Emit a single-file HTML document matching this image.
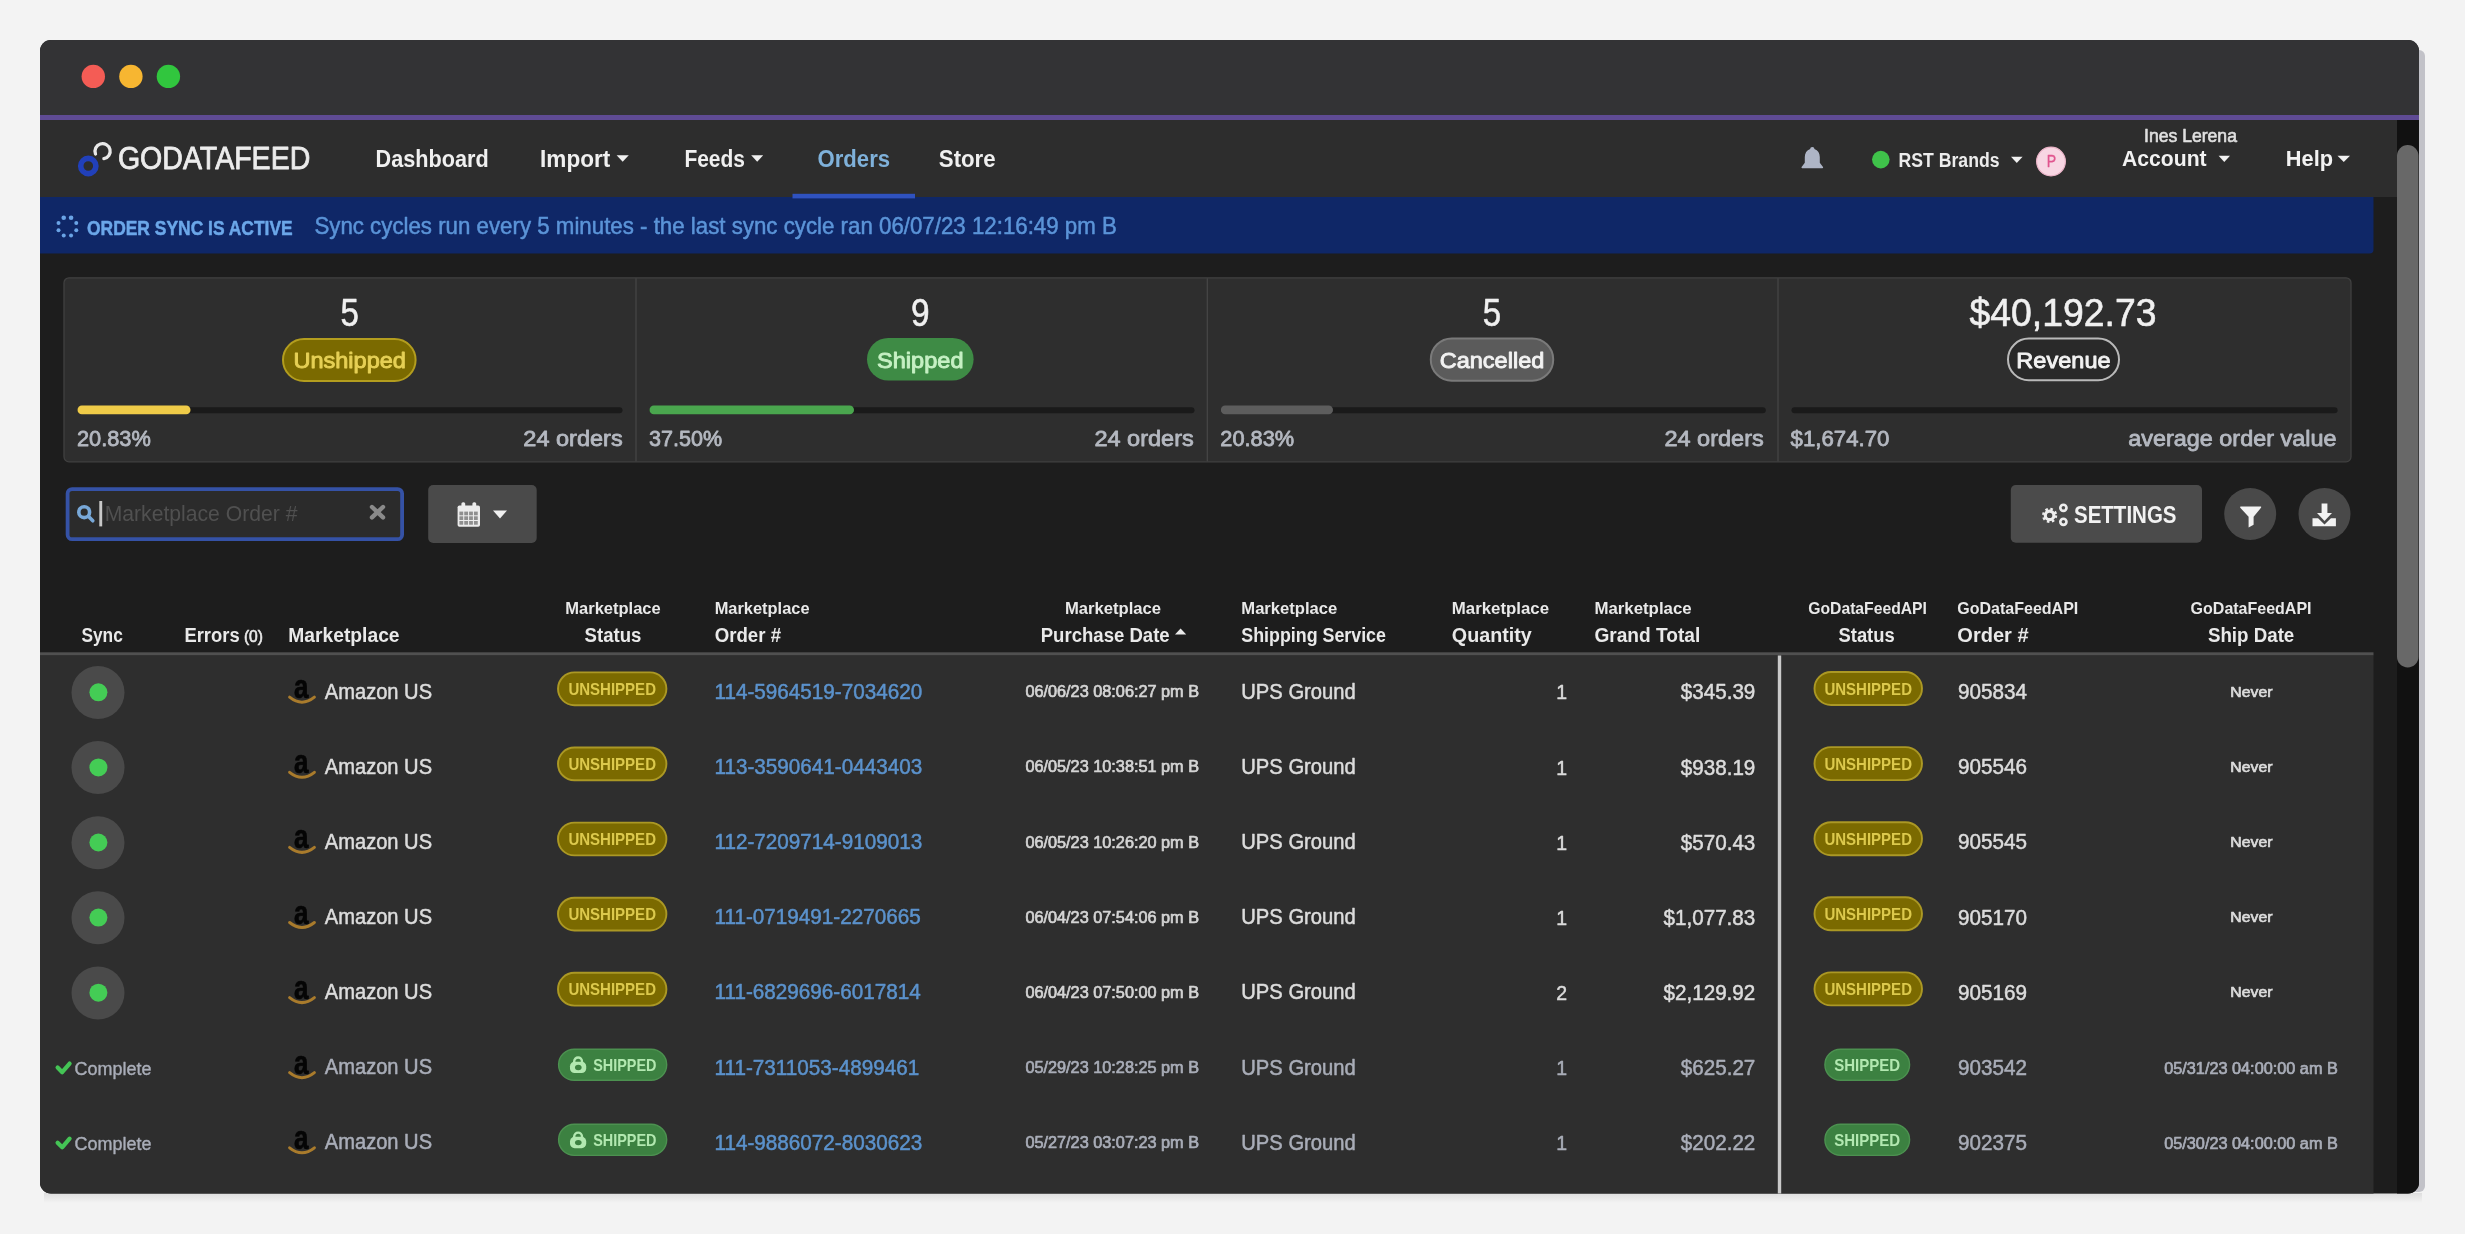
<!DOCTYPE html>
<html><head><meta charset="utf-8"><title>GoDataFeed Orders</title>
<style>html,body{margin:0;padding:0;background:#f3f3f3;overflow:hidden}
svg{display:block;will-change:transform;font-family:"Liberation Sans",sans-serif}</style></head>
<body><svg width="2465" height="1234" viewBox="0 0 2465 1234">
<rect width="2465" height="1234" fill="#f3f3f3"/>
<defs><linearGradient id="sh" x1="0" y1="0" x2="0" y2="1"><stop offset="0" stop-color="#dedede"/><stop offset="1" stop-color="#f3f3f3"/></linearGradient><clipPath id="win"><rect x="40" y="40" width="2379" height="1153.5" rx="11"/></clipPath></defs>
<rect x="44.00" y="1193.00" width="2378.00" height="10.00" fill="url(#sh)"/>
<rect x="2410.00" y="50.00" width="15.00" height="1142.00" fill="#c2c2c8" rx="6"/>
<g clip-path="url(#win)">
<rect x="40.00" y="40.00" width="2379.00" height="1154.00" fill="#1d1d1d"/>
<rect x="40.00" y="40.00" width="2379.00" height="75.00" fill="#333335"/>
<circle cx="93.30" cy="76.40" r="11.70" fill="#f45c55"/>
<circle cx="130.90" cy="76.40" r="11.70" fill="#f7b631"/>
<circle cx="168.40" cy="76.40" r="11.70" fill="#31c63e"/>
<rect x="40.00" y="115.00" width="2379.00" height="5.00" fill="#5f4b94"/>
<rect x="40.00" y="120.00" width="2379.00" height="77.00" fill="#2d2d2d"/>
<rect x="2397.00" y="120.00" width="22.00" height="1074.00" fill="#111111"/>
<rect x="2397" y="145" width="21.5" height="522.5" rx="10.75" fill="#686868"/>
<circle cx="88.3" cy="166" r="7.6" fill="none" stroke="#2140ba" stroke-width="5.6"/>
<path d="M95.5 154 A7.6 7.6 0 1 1 103.9 158.7" fill="none" stroke="#e8e8e8" stroke-width="3.3" stroke-linecap="round"/>
<text x="117.90" y="169.30" font-size="31.40" fill="#ececec" textLength="192.41" lengthAdjust="spacingAndGlyphs" stroke="#ececec" stroke-width="0.8" stroke-linejoin="round">GODATAFEED</text>
<text x="375.60" y="167.40" font-size="24.42" fill="#f0f0f0" font-weight="bold" textLength="113.15" lengthAdjust="spacingAndGlyphs">Dashboard</text>
<text x="540.10" y="167.40" font-size="24.42" fill="#f0f0f0" font-weight="bold" textLength="70.25" lengthAdjust="spacingAndGlyphs">Import</text>
<path d="M616.60 155.20H628.80L622.70 161.80Z" fill="#f0f0f0"/>
<text x="684.40" y="167.40" font-size="24.42" fill="#f0f0f0" font-weight="bold" textLength="60.55" lengthAdjust="spacingAndGlyphs">Feeds</text>
<path d="M751.20 155.20H763.20L757.20 161.80Z" fill="#f0f0f0"/>
<text x="817.50" y="167.40" font-size="24.42" fill="#7fb1da" font-weight="bold" textLength="72.55" lengthAdjust="spacingAndGlyphs">Orders</text>
<text x="938.80" y="167.40" font-size="24.42" fill="#f0f0f0" font-weight="bold" textLength="56.85" lengthAdjust="spacingAndGlyphs">Store</text>
<path d="M1812.3 147c-1.3 0-2.1 .9-2.1 1.9c-3.6 1.2-5.4 4.4-5.4 8.2v5.6l-3.2 4.4c-.3.5 0 1.1.6 1.1h20.2c.6 0 .9-.6.6-1.1l-3.2-4.4v-5.6c0-3.8-1.8-7-5.4-8.2c0-1-.8-1.9-2.1-1.9z" fill="#aeb5c6"/>
<circle cx="1880.80" cy="159.60" r="8.80" fill="#3fc24a"/>
<text x="1898.60" y="167.30" font-size="20.49" fill="#ececec" font-weight="bold" textLength="100.95" lengthAdjust="spacingAndGlyphs">RST Brands</text>
<path d="M2011.00 156.80H2022.60L2016.80 163.00Z" fill="#f0f0f0"/>
<circle cx="2051.00" cy="161.50" r="14.40" fill="#f8d6e3" stroke="#e9b2c6" stroke-width="1.2"/>
<text x="2046.79" y="166.80" font-size="15.70" fill="#e0558e" textLength="9.42" lengthAdjust="spacingAndGlyphs" stroke="#e0558e" stroke-width="0.3" stroke-linejoin="round">P</text>
<text x="2144.00" y="141.70" font-size="18.31" fill="#e0e0e0" textLength="92.93" lengthAdjust="spacingAndGlyphs" stroke="#e0e0e0" stroke-width="0.6" stroke-linejoin="round">Ines Lerena</text>
<text x="2122.00" y="166.20" font-size="22.38" fill="#f2f2f2" font-weight="bold" textLength="84.60" lengthAdjust="spacingAndGlyphs">Account</text>
<path d="M2218.60 155.80H2230.00L2224.30 162.00Z" fill="#f0f0f0"/>
<text x="2285.80" y="166.20" font-size="22.38" fill="#f2f2f2" font-weight="bold" textLength="47.19" lengthAdjust="spacingAndGlyphs">Help</text>
<path d="M2337.50 155.80H2350.00L2343.75 162.00Z" fill="#f0f0f0"/>
<path d="M40 197H2373.5V249.5A4 4 0 0 1 2369.5 253.5H40Z" fill="#0f2767"/>
<rect x="792.50" y="193.80" width="122.50" height="4.60" fill="#2f52bf"/>
<circle cx="63.73" cy="217.73" r="2.30" fill="#6aa4e6"/>
<circle cx="71.07" cy="217.73" r="2.30" fill="#6aa4e6"/>
<circle cx="76.27" cy="222.93" r="2.00" fill="#6aa4e6"/>
<circle cx="76.27" cy="230.27" r="2.00" fill="#6aa4e6"/>
<circle cx="71.07" cy="235.47" r="2.00" fill="#6aa4e6"/>
<circle cx="63.73" cy="235.47" r="2.00" fill="#6aa4e6"/>
<circle cx="58.53" cy="230.27" r="2.00" fill="#6aa4e6"/>
<circle cx="58.53" cy="222.93" r="2.00" fill="#6aa4e6"/>
<text x="87.00" y="234.50" font-size="20.64" fill="#6ba7e9" font-weight="bold" textLength="205.66" lengthAdjust="spacingAndGlyphs" stroke="#6ba7e9" stroke-width="0.5" stroke-linejoin="round">ORDER SYNC IS ACTIVE</text>
<text x="314.40" y="234.00" font-size="23.11" fill="#5b94d8" textLength="802.46" lengthAdjust="spacingAndGlyphs" stroke="#5b94d8" stroke-width="0.5" stroke-linejoin="round">Sync cycles run every 5 minutes - the last sync cycle ran 06/07/23 12:16:49 pm B</text>
<rect x="64.00" y="277.80" width="2287.00" height="184.00" fill="#2e2e2e" rx="5" stroke="#404040" stroke-width="1.3"/>
<rect x="635.40" y="278.30" width="1.20" height="183.00" fill="#474747"/>
<rect x="1206.70" y="278.30" width="1.20" height="183.00" fill="#474747"/>
<rect x="1777.40" y="278.30" width="1.20" height="183.00" fill="#474747"/>
<text x="340.50" y="326.30" font-size="39.24" fill="#f0f0f0" textLength="18.36" lengthAdjust="spacingAndGlyphs" stroke="#f0f0f0" stroke-width="0.6" stroke-linejoin="round">5</text>
<text x="911.10" y="326.30" font-size="39.24" fill="#f0f0f0" textLength="18.56" lengthAdjust="spacingAndGlyphs" stroke="#f0f0f0" stroke-width="0.6" stroke-linejoin="round">9</text>
<text x="1482.80" y="326.30" font-size="39.24" fill="#f0f0f0" textLength="18.36" lengthAdjust="spacingAndGlyphs" stroke="#f0f0f0" stroke-width="0.6" stroke-linejoin="round">5</text>
<text x="1969.50" y="326.30" font-size="39.24" fill="#f0f0f0" textLength="187.06" lengthAdjust="spacingAndGlyphs" stroke="#f0f0f0" stroke-width="0.6" stroke-linejoin="round">$40,192.73</text>
<rect x="283.00" y="339.00" width="132.60" height="42.00" fill="#7b6a00" rx="21" stroke="#b39d1e" stroke-width="2"/>
<text x="293.40" y="367.50" font-size="22.38" fill="#e6d055" textLength="112.58" lengthAdjust="spacingAndGlyphs" stroke="#e6d055" stroke-width="0.9" stroke-linejoin="round">Unshipped</text>
<rect x="867.00" y="338.00" width="106.60" height="42.50" fill="#3e8b45" rx="21.25"/>
<text x="877.09" y="367.50" font-size="22.38" fill="#c6f0c4" textLength="86.41" lengthAdjust="spacingAndGlyphs" stroke="#c6f0c4" stroke-width="0.9" stroke-linejoin="round">Shipped</text>
<rect x="1430.80" y="338.40" width="122.40" height="42.30" fill="#5b5b5b" rx="21" stroke="#7a7a7a" stroke-width="2"/>
<text x="1439.65" y="367.50" font-size="22.38" fill="#f2f2f2" textLength="104.71" lengthAdjust="spacingAndGlyphs" stroke="#f2f2f2" stroke-width="0.9" stroke-linejoin="round">Cancelled</text>
<rect x="2008.00" y="338.60" width="111.00" height="41.60" fill="#292929" rx="20.8" stroke="#b9b9b9" stroke-width="2"/>
<text x="2016.34" y="367.50" font-size="22.38" fill="#f2f2f2" textLength="94.25" lengthAdjust="spacingAndGlyphs" stroke="#f2f2f2" stroke-width="0.9" stroke-linejoin="round">Revenue</text>
<rect x="77.50" y="407.30" width="545.00" height="6.00" fill="#1a1a1a" rx="3"/>
<rect x="77.50" y="405.60" width="113.00" height="8.60" fill="#efcb48" rx="4.3"/>
<rect x="649.50" y="407.30" width="545.00" height="6.00" fill="#1a1a1a" rx="3"/>
<rect x="649.50" y="405.60" width="204.50" height="8.60" fill="#4aa64e" rx="4.3"/>
<rect x="1220.80" y="407.30" width="545.00" height="6.00" fill="#1a1a1a" rx="3"/>
<rect x="1220.80" y="405.60" width="112.20" height="8.60" fill="#5d5d5d" rx="4.3"/>
<rect x="1791.50" y="407.30" width="546.10" height="6.00" fill="#1a1a1a" rx="3"/>
<text x="77.00" y="445.50" font-size="22.09" fill="#b4b8c0" textLength="73.84" lengthAdjust="spacingAndGlyphs" stroke="#b4b8c0" stroke-width="0.8" stroke-linejoin="round">20.83%</text>
<text x="523.30" y="445.50" font-size="22.09" fill="#b4b8c0" textLength="99.36" lengthAdjust="spacingAndGlyphs" stroke="#b4b8c0" stroke-width="0.8" stroke-linejoin="round">24 orders</text>
<text x="649.00" y="445.50" font-size="22.09" fill="#b4b8c0" textLength="73.04" lengthAdjust="spacingAndGlyphs" stroke="#b4b8c0" stroke-width="0.8" stroke-linejoin="round">37.50%</text>
<text x="1094.40" y="445.50" font-size="22.09" fill="#b4b8c0" textLength="99.36" lengthAdjust="spacingAndGlyphs" stroke="#b4b8c0" stroke-width="0.8" stroke-linejoin="round">24 orders</text>
<text x="1220.30" y="445.50" font-size="22.09" fill="#b4b8c0" textLength="73.84" lengthAdjust="spacingAndGlyphs" stroke="#b4b8c0" stroke-width="0.8" stroke-linejoin="round">20.83%</text>
<text x="1664.40" y="445.50" font-size="22.09" fill="#b4b8c0" textLength="99.36" lengthAdjust="spacingAndGlyphs" stroke="#b4b8c0" stroke-width="0.8" stroke-linejoin="round">24 orders</text>
<text x="1790.60" y="445.50" font-size="22.09" fill="#b4b8c0" textLength="98.85" lengthAdjust="spacingAndGlyphs" stroke="#b4b8c0" stroke-width="0.8" stroke-linejoin="round">$1,674.70</text>
<text x="2128.20" y="445.50" font-size="22.09" fill="#b4b8c0" textLength="208.34" lengthAdjust="spacingAndGlyphs" stroke="#b4b8c0" stroke-width="0.8" stroke-linejoin="round">average order value</text>
<rect x="67.60" y="489.10" width="334.50" height="50.10" fill="#2b2b2b" rx="4.5" stroke="#3552a6" stroke-width="3.8"/>
<circle cx="84.2" cy="512.2" r="5.4" fill="none" stroke="#78a8d8" stroke-width="3.6"/><path d="M88.6 516.6L92.8 520.8" stroke="#78a8d8" stroke-width="3.6" stroke-linecap="round"/>
<rect x="99.30" y="501.00" width="2.90" height="25.40" fill="#c8c8c8"/>
<text x="104.70" y="520.60" font-size="22.09" fill="#505050" textLength="192.73" lengthAdjust="spacingAndGlyphs">Marketplace Order #</text>
<path d="M372 507L383 517.4M383 507L372 517.4" stroke="#8a8a8a" stroke-width="4.4" stroke-linecap="round"/>
<rect x="428.20" y="485.00" width="108.50" height="58.00" fill="#4a4a4a" rx="5"/>
<g fill="#ececec"><rect x="457.6" y="505.5" width="22.4" height="21.3" rx="1.8"/><rect x="461.4" y="502.2" width="3.8" height="6" rx="1.6"/><rect x="472.4" y="502.2" width="3.8" height="6" rx="1.6"/></g><g fill="#8f8f8f"><rect x="459.40" y="511.60" width="3.8" height="3.7"/><rect x="464.25" y="511.60" width="3.8" height="3.7"/><rect x="469.10" y="511.60" width="3.8" height="3.7"/><rect x="473.95" y="511.60" width="3.8" height="3.7"/><rect x="459.40" y="516.30" width="3.8" height="3.7"/><rect x="464.25" y="516.30" width="3.8" height="3.7"/><rect x="469.10" y="516.30" width="3.8" height="3.7"/><rect x="473.95" y="516.30" width="3.8" height="3.7"/><rect x="459.40" y="521.00" width="3.8" height="3.7"/><rect x="464.25" y="521.00" width="3.8" height="3.7"/><rect x="469.10" y="521.00" width="3.8" height="3.7"/><rect x="473.95" y="521.00" width="3.8" height="3.7"/></g>
<path d="M493.00 510.50H507.00L500.00 518.60Z" fill="#f0f0f0"/>
<rect x="2010.80" y="485.00" width="191.20" height="57.80" fill="#4b4b4b" rx="5"/>
<g fill="none" stroke="#eeeeee"><circle cx="2049.6" cy="515.4" r="5.9" stroke-width="3.4" stroke-dasharray="2.3 2.33"/><circle cx="2049.6" cy="515.4" r="4.3" stroke-width="3.2"/><circle cx="2063.4" cy="507.8" r="3.1" stroke-width="2.6"/><circle cx="2063.4" cy="521.8" r="3.1" stroke-width="2.6"/></g>
<text x="2074.00" y="522.80" font-size="23.55" fill="#f2f2f2" font-weight="bold" textLength="102.51" lengthAdjust="spacingAndGlyphs">SETTINGS</text>
<circle cx="2250.20" cy="514.00" r="26.00" fill="#494949"/>
<path d="M2240.6 506.6H2260.8Q2261.6 506.8 2261 507.8L2253.6 516.8V524.8L2248.6 527.6V516.8L2240.3 507.8Q2239.8 506.8 2240.6 506.6Z" fill="#f2f2f2"/>
<circle cx="2324.50" cy="514.00" r="26.00" fill="#494949"/>
<path d="M2321.6 503.4h5.8v9.6h4.6l-7.5 8l-7.5-8h4.6z" fill="#f2f2f2"/><path d="M2312.5 518.2h5.6l6.4 6.2l6.4-6.2h5v8h-23.4z" fill="#f2f2f2"/>
<text x="81.40" y="641.50" font-size="19.48" fill="#e9e9e9" font-weight="bold" textLength="41.39" lengthAdjust="spacingAndGlyphs">Sync</text>
<text x="184.40" y="641.50" font-size="19.48" fill="#e9e9e9" font-weight="bold" textLength="55.23" lengthAdjust="spacingAndGlyphs">Errors</text>
<text x="243.90" y="641.50" font-size="16.28" fill="#e9e9e9" textLength="19.09" lengthAdjust="spacingAndGlyphs" stroke="#e9e9e9" stroke-width="0.6" stroke-linejoin="round">(0)</text>
<text x="288.30" y="641.50" font-size="19.48" fill="#e9e9e9" font-weight="bold" textLength="111.28" lengthAdjust="spacingAndGlyphs">Marketplace</text>
<text x="565.30" y="613.90" font-size="15.84" fill="#e9e9e9" font-weight="bold" textLength="95.42" lengthAdjust="spacingAndGlyphs">Marketplace</text>
<text x="584.60" y="641.50" font-size="19.48" fill="#e9e9e9" font-weight="bold" textLength="56.77" lengthAdjust="spacingAndGlyphs">Status</text>
<text x="714.70" y="613.90" font-size="15.84" fill="#e9e9e9" font-weight="bold" textLength="94.82" lengthAdjust="spacingAndGlyphs">Marketplace</text>
<text x="714.70" y="641.50" font-size="19.48" fill="#e9e9e9" font-weight="bold" textLength="66.39" lengthAdjust="spacingAndGlyphs">Order #</text>
<text x="1065.00" y="613.90" font-size="15.84" fill="#e9e9e9" font-weight="bold" textLength="96.02" lengthAdjust="spacingAndGlyphs">Marketplace</text>
<text x="1040.70" y="641.50" font-size="19.48" fill="#e9e9e9" font-weight="bold" textLength="128.99" lengthAdjust="spacingAndGlyphs">Purchase Date</text>
<path d="M1175.00 634.40H1186.20L1180.60 628.60Z" fill="#e9e9e9"/>
<text x="1241.30" y="613.90" font-size="15.84" fill="#e9e9e9" font-weight="bold" textLength="96.02" lengthAdjust="spacingAndGlyphs">Marketplace</text>
<text x="1241.30" y="641.50" font-size="19.48" fill="#e9e9e9" font-weight="bold" textLength="144.67" lengthAdjust="spacingAndGlyphs">Shipping Service</text>
<text x="1451.80" y="613.90" font-size="15.84" fill="#e9e9e9" font-weight="bold" textLength="97.22" lengthAdjust="spacingAndGlyphs">Marketplace</text>
<text x="1451.80" y="641.50" font-size="19.48" fill="#e9e9e9" font-weight="bold" textLength="79.96" lengthAdjust="spacingAndGlyphs">Quantity</text>
<text x="1594.40" y="613.90" font-size="15.84" fill="#e9e9e9" font-weight="bold" textLength="97.22" lengthAdjust="spacingAndGlyphs">Marketplace</text>
<text x="1594.40" y="641.50" font-size="19.48" fill="#e9e9e9" font-weight="bold" textLength="105.88" lengthAdjust="spacingAndGlyphs">Grand Total</text>
<text x="1808.25" y="613.90" font-size="15.84" fill="#e9e9e9" font-weight="bold" textLength="118.67" lengthAdjust="spacingAndGlyphs">GoDataFeedAPI</text>
<text x="1838.50" y="641.50" font-size="19.48" fill="#e9e9e9" font-weight="bold" textLength="56.17" lengthAdjust="spacingAndGlyphs">Status</text>
<text x="1957.30" y="613.90" font-size="15.84" fill="#e9e9e9" font-weight="bold" textLength="120.97" lengthAdjust="spacingAndGlyphs">GoDataFeedAPI</text>
<text x="1957.30" y="641.50" font-size="19.48" fill="#e9e9e9" font-weight="bold" textLength="71.29" lengthAdjust="spacingAndGlyphs">Order #</text>
<text x="2190.60" y="613.90" font-size="15.84" fill="#e9e9e9" font-weight="bold" textLength="120.97" lengthAdjust="spacingAndGlyphs">GoDataFeedAPI</text>
<text x="2207.95" y="641.50" font-size="19.48" fill="#e9e9e9" font-weight="bold" textLength="86.36" lengthAdjust="spacingAndGlyphs">Ship Date</text>
<rect x="40.00" y="652.30" width="2333.50" height="3.20" fill="#505050"/>
<rect x="40.00" y="655.50" width="2333.50" height="538.50" fill="#2e2e2e"/>
<rect x="1777.80" y="655.50" width="3.40" height="538.50" fill="#c9c9c9"/>
<circle cx="98.00" cy="692.50" r="26.50" fill="#4a4a4a"/>
<circle cx="98.40" cy="692.30" r="9.00" fill="#44cc55"/>
<text x="294.10" y="698.20" font-size="34.00" fill="#050505" font-weight="bold" textLength="14.44" lengthAdjust="spacingAndGlyphs" stroke="#050505" stroke-width="0.7" stroke-linejoin="round">a</text>
<path d="M289.6 697.2Q302 707.2 314.4 697.2" fill="none" stroke="#a97b2c" stroke-width="3" stroke-linecap="round"/>
<text x="324.80" y="698.50" font-size="21.37" fill="#dcdcdc" textLength="107.25" lengthAdjust="spacingAndGlyphs" stroke="#dcdcdc" stroke-width="0.5" stroke-linejoin="round">Amazon US</text>
<rect x="558.00" y="672.40" width="108.40" height="32.80" fill="#7b6a00" rx="16.400000000000034" stroke="#ab9824" stroke-width="1.9"/>
<text x="568.40" y="694.90" font-size="16.57" fill="#dcc94c" font-weight="bold" textLength="87.59" lengthAdjust="spacingAndGlyphs">UNSHIPPED</text>
<text x="714.50" y="699.00" font-size="21.37" fill="#5b92cc" textLength="207.71" lengthAdjust="spacingAndGlyphs" stroke="#5b92cc" stroke-width="0.5" stroke-linejoin="round">114-5964519-7034620</text>
<text x="1025.40" y="697.30" font-size="16.42" fill="#d4d4d4" textLength="173.65" lengthAdjust="spacingAndGlyphs" stroke="#d4d4d4" stroke-width="0.7" stroke-linejoin="round">06/06/23 08:06:27 pm B</text>
<text x="1241.30" y="699.00" font-size="21.37" fill="#dcdcdc" textLength="114.44" lengthAdjust="spacingAndGlyphs" stroke="#dcdcdc" stroke-width="0.5" stroke-linejoin="round">UPS Ground</text>
<text x="1556.13" y="699.40" font-size="20.64" fill="#dcdcdc" textLength="10.84" lengthAdjust="spacingAndGlyphs" stroke="#dcdcdc" stroke-width="0.5" stroke-linejoin="round">1</text>
<text x="1680.80" y="699.40" font-size="21.37" fill="#dcdcdc" textLength="74.52" lengthAdjust="spacingAndGlyphs" stroke="#dcdcdc" stroke-width="0.5" stroke-linejoin="round">$345.39</text>
<rect x="1814.50" y="672.00" width="107.50" height="33.00" fill="#7b6a00" rx="16.5" stroke="#ab9824" stroke-width="1.9"/>
<text x="1824.40" y="694.90" font-size="16.57" fill="#dcc94c" font-weight="bold" textLength="87.59" lengthAdjust="spacingAndGlyphs">UNSHIPPED</text>
<text x="1958.00" y="699.20" font-size="21.37" fill="#dcdcdc" textLength="68.96" lengthAdjust="spacingAndGlyphs" stroke="#dcdcdc" stroke-width="0.5" stroke-linejoin="round">905834</text>
<text x="2230.30" y="697.00" font-size="15.12" fill="#dcdcdc" textLength="42.17" lengthAdjust="spacingAndGlyphs" stroke="#dcdcdc" stroke-width="0.7" stroke-linejoin="round">Never</text>
<circle cx="98.00" cy="767.60" r="26.50" fill="#4a4a4a"/>
<circle cx="98.40" cy="767.40" r="9.00" fill="#44cc55"/>
<text x="294.10" y="773.30" font-size="34.00" fill="#050505" font-weight="bold" textLength="14.44" lengthAdjust="spacingAndGlyphs" stroke="#050505" stroke-width="0.7" stroke-linejoin="round">a</text>
<path d="M289.6 772.3Q302 782.3 314.4 772.3" fill="none" stroke="#a97b2c" stroke-width="3" stroke-linecap="round"/>
<text x="324.80" y="773.60" font-size="21.37" fill="#dcdcdc" textLength="107.25" lengthAdjust="spacingAndGlyphs" stroke="#dcdcdc" stroke-width="0.5" stroke-linejoin="round">Amazon US</text>
<rect x="558.00" y="747.50" width="108.40" height="32.80" fill="#7b6a00" rx="16.400000000000034" stroke="#ab9824" stroke-width="1.9"/>
<text x="568.40" y="770.00" font-size="16.57" fill="#dcc94c" font-weight="bold" textLength="87.59" lengthAdjust="spacingAndGlyphs">UNSHIPPED</text>
<text x="714.50" y="774.10" font-size="21.37" fill="#5b92cc" textLength="207.71" lengthAdjust="spacingAndGlyphs" stroke="#5b92cc" stroke-width="0.5" stroke-linejoin="round">113-3590641-0443403</text>
<text x="1025.40" y="772.40" font-size="16.42" fill="#d4d4d4" textLength="173.65" lengthAdjust="spacingAndGlyphs" stroke="#d4d4d4" stroke-width="0.7" stroke-linejoin="round">06/05/23 10:38:51 pm B</text>
<text x="1241.30" y="774.10" font-size="21.37" fill="#dcdcdc" textLength="114.44" lengthAdjust="spacingAndGlyphs" stroke="#dcdcdc" stroke-width="0.5" stroke-linejoin="round">UPS Ground</text>
<text x="1556.13" y="774.50" font-size="20.64" fill="#dcdcdc" textLength="10.84" lengthAdjust="spacingAndGlyphs" stroke="#dcdcdc" stroke-width="0.5" stroke-linejoin="round">1</text>
<text x="1680.80" y="774.50" font-size="21.37" fill="#dcdcdc" textLength="74.52" lengthAdjust="spacingAndGlyphs" stroke="#dcdcdc" stroke-width="0.5" stroke-linejoin="round">$938.19</text>
<rect x="1814.50" y="747.10" width="107.50" height="33.00" fill="#7b6a00" rx="16.5" stroke="#ab9824" stroke-width="1.9"/>
<text x="1824.40" y="770.00" font-size="16.57" fill="#dcc94c" font-weight="bold" textLength="87.59" lengthAdjust="spacingAndGlyphs">UNSHIPPED</text>
<text x="1958.00" y="774.30" font-size="21.37" fill="#dcdcdc" textLength="68.96" lengthAdjust="spacingAndGlyphs" stroke="#dcdcdc" stroke-width="0.5" stroke-linejoin="round">905546</text>
<text x="2230.30" y="772.10" font-size="15.12" fill="#dcdcdc" textLength="42.17" lengthAdjust="spacingAndGlyphs" stroke="#dcdcdc" stroke-width="0.7" stroke-linejoin="round">Never</text>
<circle cx="98.00" cy="842.70" r="26.50" fill="#4a4a4a"/>
<circle cx="98.40" cy="842.50" r="9.00" fill="#44cc55"/>
<text x="294.10" y="848.40" font-size="34.00" fill="#050505" font-weight="bold" textLength="14.44" lengthAdjust="spacingAndGlyphs" stroke="#050505" stroke-width="0.7" stroke-linejoin="round">a</text>
<path d="M289.6 847.4Q302 857.4 314.4 847.4" fill="none" stroke="#a97b2c" stroke-width="3" stroke-linecap="round"/>
<text x="324.80" y="848.70" font-size="21.37" fill="#dcdcdc" textLength="107.25" lengthAdjust="spacingAndGlyphs" stroke="#dcdcdc" stroke-width="0.5" stroke-linejoin="round">Amazon US</text>
<rect x="558.00" y="822.60" width="108.40" height="32.80" fill="#7b6a00" rx="16.40000000000009" stroke="#ab9824" stroke-width="1.9"/>
<text x="568.40" y="845.10" font-size="16.57" fill="#dcc94c" font-weight="bold" textLength="87.59" lengthAdjust="spacingAndGlyphs">UNSHIPPED</text>
<text x="714.50" y="849.20" font-size="21.37" fill="#5b92cc" textLength="207.71" lengthAdjust="spacingAndGlyphs" stroke="#5b92cc" stroke-width="0.5" stroke-linejoin="round">112-7209714-9109013</text>
<text x="1025.40" y="847.50" font-size="16.42" fill="#d4d4d4" textLength="173.65" lengthAdjust="spacingAndGlyphs" stroke="#d4d4d4" stroke-width="0.7" stroke-linejoin="round">06/05/23 10:26:20 pm B</text>
<text x="1241.30" y="849.20" font-size="21.37" fill="#dcdcdc" textLength="114.44" lengthAdjust="spacingAndGlyphs" stroke="#dcdcdc" stroke-width="0.5" stroke-linejoin="round">UPS Ground</text>
<text x="1556.13" y="849.60" font-size="20.64" fill="#dcdcdc" textLength="10.84" lengthAdjust="spacingAndGlyphs" stroke="#dcdcdc" stroke-width="0.5" stroke-linejoin="round">1</text>
<text x="1680.80" y="849.60" font-size="21.37" fill="#dcdcdc" textLength="74.52" lengthAdjust="spacingAndGlyphs" stroke="#dcdcdc" stroke-width="0.5" stroke-linejoin="round">$570.43</text>
<rect x="1814.50" y="822.20" width="107.50" height="33.00" fill="#7b6a00" rx="16.5" stroke="#ab9824" stroke-width="1.9"/>
<text x="1824.40" y="845.10" font-size="16.57" fill="#dcc94c" font-weight="bold" textLength="87.59" lengthAdjust="spacingAndGlyphs">UNSHIPPED</text>
<text x="1958.00" y="849.40" font-size="21.37" fill="#dcdcdc" textLength="68.96" lengthAdjust="spacingAndGlyphs" stroke="#dcdcdc" stroke-width="0.5" stroke-linejoin="round">905545</text>
<text x="2230.30" y="847.20" font-size="15.12" fill="#dcdcdc" textLength="42.17" lengthAdjust="spacingAndGlyphs" stroke="#dcdcdc" stroke-width="0.7" stroke-linejoin="round">Never</text>
<circle cx="98.00" cy="917.80" r="26.50" fill="#4a4a4a"/>
<circle cx="98.40" cy="917.60" r="9.00" fill="#44cc55"/>
<text x="294.10" y="923.50" font-size="34.00" fill="#050505" font-weight="bold" textLength="14.44" lengthAdjust="spacingAndGlyphs" stroke="#050505" stroke-width="0.7" stroke-linejoin="round">a</text>
<path d="M289.6 922.5Q302 932.5 314.4 922.5" fill="none" stroke="#a97b2c" stroke-width="3" stroke-linecap="round"/>
<text x="324.80" y="923.80" font-size="21.37" fill="#dcdcdc" textLength="107.25" lengthAdjust="spacingAndGlyphs" stroke="#dcdcdc" stroke-width="0.5" stroke-linejoin="round">Amazon US</text>
<rect x="558.00" y="897.70" width="108.40" height="32.80" fill="#7b6a00" rx="16.400000000000034" stroke="#ab9824" stroke-width="1.9"/>
<text x="568.40" y="920.20" font-size="16.57" fill="#dcc94c" font-weight="bold" textLength="87.59" lengthAdjust="spacingAndGlyphs">UNSHIPPED</text>
<text x="714.50" y="924.30" font-size="21.37" fill="#5b92cc" textLength="206.17" lengthAdjust="spacingAndGlyphs" stroke="#5b92cc" stroke-width="0.5" stroke-linejoin="round">111-0719491-2270665</text>
<text x="1025.40" y="922.60" font-size="16.42" fill="#d4d4d4" textLength="173.65" lengthAdjust="spacingAndGlyphs" stroke="#d4d4d4" stroke-width="0.7" stroke-linejoin="round">06/04/23 07:54:06 pm B</text>
<text x="1241.30" y="924.30" font-size="21.37" fill="#dcdcdc" textLength="114.44" lengthAdjust="spacingAndGlyphs" stroke="#dcdcdc" stroke-width="0.5" stroke-linejoin="round">UPS Ground</text>
<text x="1556.13" y="924.70" font-size="20.64" fill="#dcdcdc" textLength="10.84" lengthAdjust="spacingAndGlyphs" stroke="#dcdcdc" stroke-width="0.5" stroke-linejoin="round">1</text>
<text x="1663.56" y="924.70" font-size="21.37" fill="#dcdcdc" textLength="91.71" lengthAdjust="spacingAndGlyphs" stroke="#dcdcdc" stroke-width="0.5" stroke-linejoin="round">$1,077.83</text>
<rect x="1814.50" y="897.30" width="107.50" height="33.00" fill="#7b6a00" rx="16.5" stroke="#ab9824" stroke-width="1.9"/>
<text x="1824.40" y="920.20" font-size="16.57" fill="#dcc94c" font-weight="bold" textLength="87.59" lengthAdjust="spacingAndGlyphs">UNSHIPPED</text>
<text x="1958.00" y="924.50" font-size="21.37" fill="#dcdcdc" textLength="68.96" lengthAdjust="spacingAndGlyphs" stroke="#dcdcdc" stroke-width="0.5" stroke-linejoin="round">905170</text>
<text x="2230.30" y="922.30" font-size="15.12" fill="#dcdcdc" textLength="42.17" lengthAdjust="spacingAndGlyphs" stroke="#dcdcdc" stroke-width="0.7" stroke-linejoin="round">Never</text>
<circle cx="98.00" cy="992.90" r="26.50" fill="#4a4a4a"/>
<circle cx="98.40" cy="992.70" r="9.00" fill="#44cc55"/>
<text x="294.10" y="998.60" font-size="34.00" fill="#050505" font-weight="bold" textLength="14.44" lengthAdjust="spacingAndGlyphs" stroke="#050505" stroke-width="0.7" stroke-linejoin="round">a</text>
<path d="M289.6 997.6Q302 1007.6 314.4 997.6" fill="none" stroke="#a97b2c" stroke-width="3" stroke-linecap="round"/>
<text x="324.80" y="998.90" font-size="21.37" fill="#dcdcdc" textLength="107.25" lengthAdjust="spacingAndGlyphs" stroke="#dcdcdc" stroke-width="0.5" stroke-linejoin="round">Amazon US</text>
<rect x="558.00" y="972.80" width="108.40" height="32.80" fill="#7b6a00" rx="16.400000000000034" stroke="#ab9824" stroke-width="1.9"/>
<text x="568.40" y="995.30" font-size="16.57" fill="#dcc94c" font-weight="bold" textLength="87.59" lengthAdjust="spacingAndGlyphs">UNSHIPPED</text>
<text x="714.50" y="999.40" font-size="21.37" fill="#5b92cc" textLength="206.17" lengthAdjust="spacingAndGlyphs" stroke="#5b92cc" stroke-width="0.5" stroke-linejoin="round">111-6829696-6017814</text>
<text x="1025.40" y="997.70" font-size="16.42" fill="#d4d4d4" textLength="173.65" lengthAdjust="spacingAndGlyphs" stroke="#d4d4d4" stroke-width="0.7" stroke-linejoin="round">06/04/23 07:50:00 pm B</text>
<text x="1241.30" y="999.40" font-size="21.37" fill="#dcdcdc" textLength="114.44" lengthAdjust="spacingAndGlyphs" stroke="#dcdcdc" stroke-width="0.5" stroke-linejoin="round">UPS Ground</text>
<text x="1556.13" y="999.80" font-size="20.64" fill="#dcdcdc" textLength="10.84" lengthAdjust="spacingAndGlyphs" stroke="#dcdcdc" stroke-width="0.5" stroke-linejoin="round">2</text>
<text x="1663.56" y="999.80" font-size="21.37" fill="#dcdcdc" textLength="91.71" lengthAdjust="spacingAndGlyphs" stroke="#dcdcdc" stroke-width="0.5" stroke-linejoin="round">$2,129.92</text>
<rect x="1814.50" y="972.40" width="107.50" height="33.00" fill="#7b6a00" rx="16.5" stroke="#ab9824" stroke-width="1.9"/>
<text x="1824.40" y="995.30" font-size="16.57" fill="#dcc94c" font-weight="bold" textLength="87.59" lengthAdjust="spacingAndGlyphs">UNSHIPPED</text>
<text x="1958.00" y="999.60" font-size="21.37" fill="#dcdcdc" textLength="68.96" lengthAdjust="spacingAndGlyphs" stroke="#dcdcdc" stroke-width="0.5" stroke-linejoin="round">905169</text>
<text x="2230.30" y="997.40" font-size="15.12" fill="#dcdcdc" textLength="42.17" lengthAdjust="spacingAndGlyphs" stroke="#dcdcdc" stroke-width="0.7" stroke-linejoin="round">Never</text>
<path d="M57.6 1067.6l4.6 4.6l7.4-8.6" fill="none" stroke="#44c455" stroke-width="4.2" stroke-linecap="round" stroke-linejoin="round"/>
<text x="74.60" y="1074.60" font-size="19.19" fill="#a9adb8" textLength="76.88" lengthAdjust="spacingAndGlyphs" stroke="#a9adb8" stroke-width="0.4" stroke-linejoin="round">Complete</text>
<text x="294.10" y="1073.70" font-size="34.00" fill="#050505" font-weight="bold" textLength="14.44" lengthAdjust="spacingAndGlyphs" stroke="#050505" stroke-width="0.7" stroke-linejoin="round">a</text>
<path d="M289.6 1072.7Q302 1082.7 314.4 1072.7" fill="none" stroke="#a97b2c" stroke-width="3" stroke-linecap="round"/>
<text x="324.80" y="1074.00" font-size="21.37" fill="#a9adb8" textLength="107.25" lengthAdjust="spacingAndGlyphs" stroke="#a9adb8" stroke-width="0.5" stroke-linejoin="round">Amazon US</text>
<rect x="558.60" y="1049.20" width="108.10" height="31.10" fill="#3c8141" rx="15.55" stroke="#4c9150" stroke-width="1.4"/>
<path d="M574.2 1063.0v-1.6a3.9 3.9 0 0 1 7.8 0v1.6" fill="none" stroke="#b2e8b0" stroke-width="2.4"/><rect x="570.0" y="1061.7" width="16.2" height="11.4" rx="4.6" fill="#b2e8b0"/><ellipse cx="578.3" cy="1067.5" rx="3.3" ry="2.7" fill="#3c8141"/>
<text x="593.20" y="1071.10" font-size="16.57" fill="#b2e8b0" font-weight="bold" textLength="63.28" lengthAdjust="spacingAndGlyphs">SHIPPED</text>
<text x="714.50" y="1074.50" font-size="21.37" fill="#5b92cc" textLength="204.64" lengthAdjust="spacingAndGlyphs" stroke="#5b92cc" stroke-width="0.5" stroke-linejoin="round">111-7311053-4899461</text>
<text x="1025.40" y="1072.80" font-size="16.42" fill="#a9adb8" textLength="173.65" lengthAdjust="spacingAndGlyphs" stroke="#a9adb8" stroke-width="0.7" stroke-linejoin="round">05/29/23 10:28:25 pm B</text>
<text x="1241.30" y="1074.50" font-size="21.37" fill="#a9adb8" textLength="114.44" lengthAdjust="spacingAndGlyphs" stroke="#a9adb8" stroke-width="0.5" stroke-linejoin="round">UPS Ground</text>
<text x="1556.13" y="1074.90" font-size="20.64" fill="#a9adb8" textLength="10.84" lengthAdjust="spacingAndGlyphs" stroke="#a9adb8" stroke-width="0.5" stroke-linejoin="round">1</text>
<text x="1680.80" y="1074.90" font-size="21.37" fill="#a9adb8" textLength="74.52" lengthAdjust="spacingAndGlyphs" stroke="#a9adb8" stroke-width="0.5" stroke-linejoin="round">$625.27</text>
<rect x="1824.90" y="1049.20" width="84.70" height="31.10" fill="#3c8141" rx="15.55" stroke="#4c9150" stroke-width="1.4"/>
<text x="1834.24" y="1071.10" font-size="16.57" fill="#b2e8b0" font-weight="bold" textLength="65.91" lengthAdjust="spacingAndGlyphs">SHIPPED</text>
<text x="1958.00" y="1074.70" font-size="21.37" fill="#a9adb8" textLength="68.96" lengthAdjust="spacingAndGlyphs" stroke="#a9adb8" stroke-width="0.5" stroke-linejoin="round">903542</text>
<text x="2164.20" y="1073.60" font-size="16.42" fill="#a9adb8" textLength="173.65" lengthAdjust="spacingAndGlyphs" stroke="#a9adb8" stroke-width="0.7" stroke-linejoin="round">05/31/23 04:00:00 am B</text>
<path d="M57.6 1142.7l4.6 4.6l7.4-8.6" fill="none" stroke="#44c455" stroke-width="4.2" stroke-linecap="round" stroke-linejoin="round"/>
<text x="74.60" y="1149.70" font-size="19.19" fill="#a9adb8" textLength="76.88" lengthAdjust="spacingAndGlyphs" stroke="#a9adb8" stroke-width="0.4" stroke-linejoin="round">Complete</text>
<text x="294.10" y="1148.80" font-size="34.00" fill="#050505" font-weight="bold" textLength="14.44" lengthAdjust="spacingAndGlyphs" stroke="#050505" stroke-width="0.7" stroke-linejoin="round">a</text>
<path d="M289.6 1147.8Q302 1157.8 314.4 1147.8" fill="none" stroke="#a97b2c" stroke-width="3" stroke-linecap="round"/>
<text x="324.80" y="1149.10" font-size="21.37" fill="#a9adb8" textLength="107.25" lengthAdjust="spacingAndGlyphs" stroke="#a9adb8" stroke-width="0.5" stroke-linejoin="round">Amazon US</text>
<rect x="558.60" y="1124.30" width="108.10" height="31.10" fill="#3c8141" rx="15.55" stroke="#4c9150" stroke-width="1.4"/>
<path d="M574.2 1138.1v-1.6a3.9 3.9 0 0 1 7.8 0v1.6" fill="none" stroke="#b2e8b0" stroke-width="2.4"/><rect x="570.0" y="1136.8" width="16.2" height="11.4" rx="4.6" fill="#b2e8b0"/><ellipse cx="578.3" cy="1142.6" rx="3.3" ry="2.7" fill="#3c8141"/>
<text x="593.20" y="1146.20" font-size="16.57" fill="#b2e8b0" font-weight="bold" textLength="63.28" lengthAdjust="spacingAndGlyphs">SHIPPED</text>
<text x="714.50" y="1149.60" font-size="21.37" fill="#5b92cc" textLength="207.71" lengthAdjust="spacingAndGlyphs" stroke="#5b92cc" stroke-width="0.5" stroke-linejoin="round">114-9886072-8030623</text>
<text x="1025.40" y="1147.90" font-size="16.42" fill="#a9adb8" textLength="173.65" lengthAdjust="spacingAndGlyphs" stroke="#a9adb8" stroke-width="0.7" stroke-linejoin="round">05/27/23 03:07:23 pm B</text>
<text x="1241.30" y="1149.60" font-size="21.37" fill="#a9adb8" textLength="114.44" lengthAdjust="spacingAndGlyphs" stroke="#a9adb8" stroke-width="0.5" stroke-linejoin="round">UPS Ground</text>
<text x="1556.13" y="1150.00" font-size="20.64" fill="#a9adb8" textLength="10.84" lengthAdjust="spacingAndGlyphs" stroke="#a9adb8" stroke-width="0.5" stroke-linejoin="round">1</text>
<text x="1680.80" y="1150.00" font-size="21.37" fill="#a9adb8" textLength="74.52" lengthAdjust="spacingAndGlyphs" stroke="#a9adb8" stroke-width="0.5" stroke-linejoin="round">$202.22</text>
<rect x="1824.90" y="1124.30" width="84.70" height="31.10" fill="#3c8141" rx="15.55" stroke="#4c9150" stroke-width="1.4"/>
<text x="1834.24" y="1146.20" font-size="16.57" fill="#b2e8b0" font-weight="bold" textLength="65.91" lengthAdjust="spacingAndGlyphs">SHIPPED</text>
<text x="1958.00" y="1149.80" font-size="21.37" fill="#a9adb8" textLength="68.96" lengthAdjust="spacingAndGlyphs" stroke="#a9adb8" stroke-width="0.5" stroke-linejoin="round">902375</text>
<text x="2164.20" y="1148.70" font-size="16.42" fill="#a9adb8" textLength="173.65" lengthAdjust="spacingAndGlyphs" stroke="#a9adb8" stroke-width="0.7" stroke-linejoin="round">05/30/23 04:00:00 am B</text>
</g>
</svg></body></html>
